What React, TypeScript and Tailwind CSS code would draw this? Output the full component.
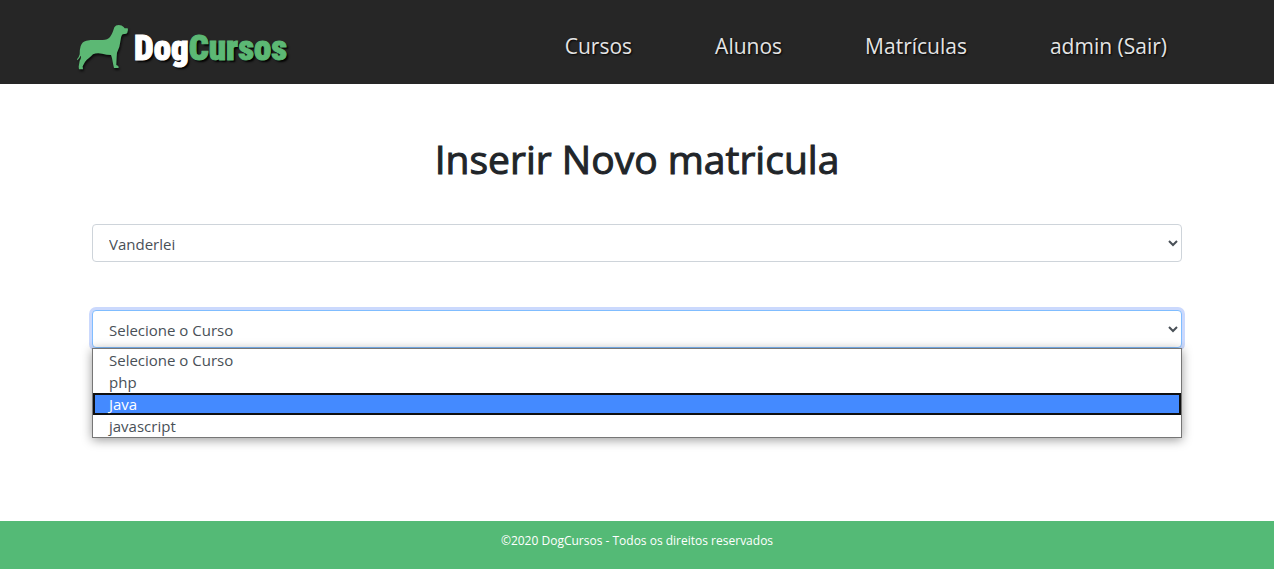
import { useState } from "react";

const links = ["Cursos", "Alunos", "Matrículas", "admin (Sair)"];
const courses = ["Selecione o Curso", "php", "Java", "javascript"];

function Dog() {
  return (
    <svg
      viewBox="0 0 180 162"
      className="h-[54px] w-[60px] drop-shadow-[1px_2px_1px_rgba(0,0,0,0.7)]"
      fill="#5cb874"
      aria-hidden="true"
    >
      <path d="M121 22 Q125 15 134 15 Q144 15 149 21 L152 25 L161 25 L162 29 L160 38 Q158 42 152 42 L146 43 Q142 47 141 53 L139 65 Q137 81 132 91 L129 98 L128 112 L127 135 L133 138 L134 144 L120 144 L118 136 L114 115 L111 105 Q98 105 84 101 Q68 98 57 103 Q51 109 45 114 Q38 119 33 126 L26 139 L27 148 L15 148 L14 140 L17 122 Q21 116 21 110 L20 107 Q16 116 10 121 L9 118 Q15 112 17 103 Q17 87 20 78 Q24 65 37 62 L50 60 L86 60 Q101 60 108 51 Q114 43 117 34 Z" />
    </svg>
  );
}

export default function App() {
  const [active, setActive] = useState("Java");
  return (
    <div className="flex min-h-screen flex-col bg-white font-['Open_Sans',sans-serif] text-[#212529]">
      <header className="bg-[#262626]">
        <div className="mx-auto flex h-[84px] max-w-[1140px] items-center justify-between pr-10 pl-[7px]">
          <a href="#inicio" className="flex items-center pt-[10px]">
            <Dog />
            <span className="pt-0.5 font-['Roboto_Condensed',sans-serif] text-[35px] leading-none font-black text-white [-webkit-text-stroke:1px_#fff] [text-shadow:2px_2px_2px_#000]">
              Dog
              <span className="text-[#5cb874] [-webkit-text-stroke:1px_#5cb874]">Cursos</span>
            </span>
          </a>
          <nav className="flex gap-[83px] pt-[10px] text-[21px] text-[#e4e4e4] [text-shadow:1px_1px_2px_#000]">
            {links.map((l) => (
              <a key={l} href="#menu">
                {l}
              </a>
            ))}
          </nav>
        </div>
      </header>

      <main className="mx-auto w-full max-w-[1140px] flex-1 px-[25px] pt-12">
        <h1 className="text-center text-[39px] leading-[54px] [-webkit-text-stroke:1px_#212529]">
          Inserir Novo matricula
        </h1>
        <form className="mt-[38px] flex flex-col gap-12 text-[15px] text-[#495057]">
          <select
            aria-label="Aluno"
            className="h-[38px] w-full rounded border border-[#ced4da] bg-white px-3 pt-0.5 outline-none"
          >
            <option>Vanderlei</option>
          </select>
          <div className="relative">
            <select
              aria-label="Curso"
              className="block h-[38px] w-full rounded border border-[#80bdff] bg-white px-3 pt-0.5 ring-3 ring-[#cbd9fd] outline-none"
            >
              {courses.map((c) => (
                <option key={c}>{c}</option>
              ))}
            </select>
            <ul
              role="listbox"
              aria-label="Opções de curso"
              className="absolute inset-x-0 top-full border border-[#767676] bg-white shadow-[0_2px_10px_rgba(0,0,0,0.4)]"
            >
              {courses.map((c) => (
                <li
                  key={c}
                  role="option"
                  aria-selected={c === active}
                  onMouseEnter={() => setActive(c)}
                  className={
                    c === active
                      ? "flex h-[22px] items-center border-2 border-[#101010] bg-[#448aff] px-[14px] text-white"
                      : "flex h-[22px] items-center px-4"
                  }
                >
                  {c}
                </li>
              ))}
            </ul>
          </div>
        </form>
      </main>

      <footer className="h-12 bg-[#54ba76] pt-[11px] text-center text-[12px] leading-[18px] text-white">
        ©2020 DogCursos - Todos os direitos reservados
      </footer>
    </div>
  );
}
